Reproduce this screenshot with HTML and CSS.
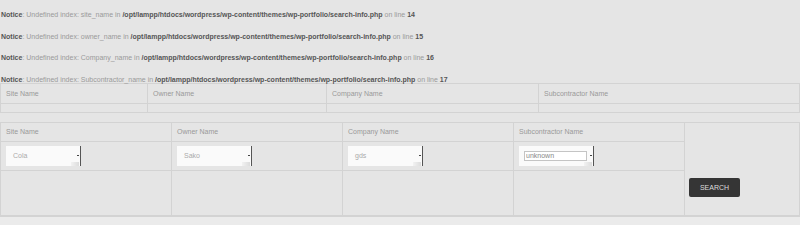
FILE: index.html
```html
<!DOCTYPE html>
<html lang="en">
<head>
    <meta charset="UTF-8">
    <title>Search Info</title>
    <link rel="stylesheet" href="styles.css">
</head>
<body>
    <div class="notices">
        <div class="notice"><b>Notice</b>: Undefined index: site_name in <b>/opt/lampp/htdocs/wordpress/wp-content/themes/wp-portfolio/search-info.php</b> on line <b>14</b></div>
        <div class="notice"><b>Notice</b>: Undefined index: owner_name in <b>/opt/lampp/htdocs/wordpress/wp-content/themes/wp-portfolio/search-info.php</b> on line <b>15</b></div>
        <div class="notice"><b>Notice</b>: Undefined index: Company_name in <b>/opt/lampp/htdocs/wordpress/wp-content/themes/wp-portfolio/search-info.php</b> on line <b>16</b></div>
        <div class="notice"><b>Notice</b>: Undefined index: Subcontractor_name in <b>/opt/lampp/htdocs/wordpress/wp-content/themes/wp-portfolio/search-info.php</b> on line <b>17</b></div>
    </div>

    <table class="results">
        <colgroup><col class="c1"><col class="c2"><col class="c3"><col></colgroup>
        <tr class="head"><th>Site Name</th><th>Owner Name</th><th>Company Name</th><th>Subcontractor Name</th></tr>
        <tr class="empty"><td></td><td></td><td></td><td></td></tr>
    </table>

    <form class="search" onsubmit="return false;">
        <table class="search-table">
            <colgroup><col class="s"><col class="s"><col class="s"><col class="s"><col></colgroup>
            <tr class="head">
                <th>Site Name</th><th>Owner Name</th><th>Company Name</th><th>Subcontractor Name</th>
                <td rowspan="3" class="action"><button type="submit" class="button">SEARCH</button></td>
            </tr>
            <tr class="fields">
                <td><div class="pick">Cola</div></td>
                <td><div class="pick">Sako</div></td>
                <td><div class="pick">gds</div></td>
                <td><div class="pick pick-input"><input type="text" class="text" value="unknown"></div></td>
            </tr>
            <tr class="spacer"><td></td><td></td><td></td><td></td></tr>
        </table>
    </form>
    <div class="footer"></div>
</body>
</html>
```

FILE: styles.css
```css
body { margin: 0; background: #e5e5e5; font-family: "Liberation Sans", Arial, sans-serif; font-size: 7px; color: #999; }
.notices { padding-top: 11px; }
.notice { line-height: 8px; margin-bottom: 13.5px; padding-left: 1px; color: #9a9a9a; white-space: nowrap; }
.notice:last-child { margin-bottom: 0; }
.notice b { color: #555; }

table { border-collapse: collapse; table-layout: fixed; width: 800px; }
th, td { border: 1px solid #d3d3d3; padding: 0 5px; text-align: left; font-weight: normal; color: #999; vertical-align: middle; }

.results { margin-top: -1px; }
.results .c1 { width: 147px; }
.results .c2 { width: 179px; }
.results .c3 { width: 212px; }
.results .head { height: 20px; }
.results .empty { height: 9px; }

.search { margin: 9px 0 0; }
.search-table .s { width: 171px; }
.search-table .head { height: 19px; }
.search-table .fields { height: 29px; }
.search-table .spacer { height: 45px; }
.search-table .action { vertical-align: bottom; padding: 0 4px 18px; }

.pick { position: relative; width: 75px; height: 20px; box-sizing: border-box; border-right: 1px solid #555; padding-left: 7px; line-height: 20px; color: #aaa; background-color: #fafafa; background-image: linear-gradient(to left, transparent 1px, #dcdcdc 1px, #f2f2f2 9px, transparent 9px); background-size: 100% 4px; background-position: bottom; background-repeat: no-repeat; }
.pick::after { content: ""; position: absolute; right: 1px; top: 9px; width: 2px; height: 1px; background: #444; }
.pick-input { padding-left: 5px; }
.text { width: 63px; height: 10px; box-sizing: border-box; border: 1px solid #c4c4c4; background: #fff; font: 7px "Liberation Sans", Arial, sans-serif; color: #888; padding: 0 1px; vertical-align: middle; }

.button { width: 51px; height: 19px; background: #353535; color: #ddd; border: none; border-radius: 2px; font: 7px "Liberation Sans", Arial, sans-serif; padding: 0; cursor: pointer; }

.footer { height: 11px; background: #ebebeb; border-top: 1px solid #d3d3d3; }
```
